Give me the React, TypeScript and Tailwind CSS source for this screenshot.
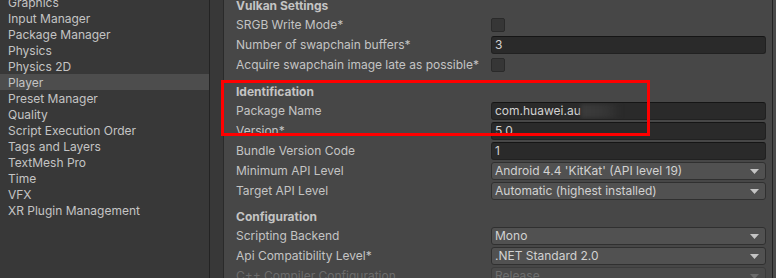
import React from 'react';

const sidebarItems = [
  'Graphics',
  'Input Manager',
  'Package Manager',
  'Physics',
  'Physics 2D',
  'Player',
  'Preset Manager',
  'Quality',
  'Script Execution Order',
  'Tags and Layers',
  'TextMesh Pro',
  'Time',
  'VFX',
  'XR Plugin Management',
];

const Arrow = ({ dim }: { dim?: boolean }) => (
  <svg width="9" height="5" viewBox="0 0 9 5" className="shrink-0">
    <path d="M0 0 H9 L4.5 5 Z" fill={dim ? '#6a6a6a' : '#c4c4c4'} />
  </svg>
);

const Header = ({ title, gap }: { title: string; gap: string }) => (
  <div className={`${gap} h-[19px] shrink-0 flex items-center font-bold text-[#c4c4c4]`}>
    {title}
  </div>
);

const Row = ({
  label,
  children,
  disabled,
}: {
  label: string;
  children: React.ReactNode;
  disabled?: boolean;
}) => (
  <div className="h-[20px] shrink-0 flex items-center">
    <div
      className={`w-[255px] shrink-0 ${disabled ? 'text-[#6c6c6c]' : 'text-[#c4c4c4]'}`}
    >
      {label}
    </div>
    <div className="flex-1 flex items-center">{children}</div>
  </div>
);

const Checkbox = () => (
  <div className="w-[14px] h-[14px] rounded-[2px] bg-[#363636] border border-[#2a2a2a]" />
);

const TextField = ({ children }: { children: React.ReactNode }) => (
  <div className="w-full h-[18px] rounded-[3px] bg-[#2a2a2a] border border-[#212121] border-t-[#151515] flex items-center px-[3px] text-[#d2d2d2] overflow-hidden">
    {children}
  </div>
);

const Dropdown = ({ value, disabled }: { value: string; disabled?: boolean }) => (
  <div
    className={`w-full h-[18px] rounded-[3px] border flex items-center justify-between pl-[3px] pr-[6px] ${
      disabled
        ? 'bg-[#4a4a4a] border-[#3c3c3c] text-[#6e6e6e]'
        : 'bg-[#515151] border-[#303030] text-[#d2d2d2]'
    }`}
  >
    <span>{value}</span>
    <Arrow dim={disabled} />
  </div>
);

export default function App() {
  return (
    <div
      className="relative w-[776px] h-[278px] flex overflow-hidden text-[12px] leading-[16px] bg-[#474747]"
      style={{ fontFamily: 'Inter, "Noto Sans", sans-serif' }}
    >
      <div className="w-[209px] shrink-0 bg-[#383838] text-[#c4c4c4]">
        <div className="-mt-[6px]">
          {sidebarItems.map((item) => (
            <div
              key={item}
              className={`h-[16px] flex items-center pl-[8px] pt-px ${
                item === 'Player' ? 'bg-[#4d4d4d]' : ''
              }`}
            >
              {item}
            </div>
          ))}
        </div>
      </div>
      <div className="w-px shrink-0 bg-[#232323]" />
      <div className="w-[13px] shrink-0 bg-[#383838]" />
      <div className="w-px shrink-0 bg-[#2a2a2a]" />

      <div className="flex-1 flex flex-col pl-[12px] pr-[6px] bg-[#474747]">
        <Header title="Vulkan Settings" gap="-mt-[4px]" />
        <Row label="SRGB Write Mode*">
          <Checkbox />
        </Row>
        <Row label="Number of swapchain buffers*">
          <TextField>3</TextField>
        </Row>
        <Row label="Acquire swapchain image late as possible*">
          <Checkbox />
        </Row>

        <Header title="Identification" gap="mt-[7px]" />
        <Row label="Package Name">
          <TextField>
            <span>com.huawei.au</span>
            <span className="w-[40px] h-[14px] blur-[2px] bg-[linear-gradient(90deg,#3c3c3c,#363636_60%,rgba(42,42,42,0))]" />
          </TextField>
        </Row>
        <Row label="Version*">
          <TextField>5.0</TextField>
        </Row>
        <Row label="Bundle Version Code">
          <TextField>1</TextField>
        </Row>
        <Row label="Minimum API Level">
          <Dropdown value="Android 4.4 'KitKat' (API level 19)" />
        </Row>
        <Row label="Target API Level">
          <Dropdown value="Automatic (highest installed)" />
        </Row>

        <Header title="Configuration" gap="mt-[6px]" />
        <Row label="Scripting Backend">
          <Dropdown value="Mono" />
        </Row>
        <Row label="Api Compatibility Level*">
          <Dropdown value=".NET Standard 2.0" />
        </Row>
        <Row label="C++ Compiler Configuration" disabled>
          <Dropdown value="Release" disabled />
        </Row>
      </div>
      <div className="w-px shrink-0 bg-[#232323]" />
      <div className="w-[3px] shrink-0 bg-[#4a4a4a]" />

      <div className="absolute left-[221px] top-[80px] w-[429px] h-[56px] border-[3px] border-[#ff0000]" />
    </div>
  );
}
